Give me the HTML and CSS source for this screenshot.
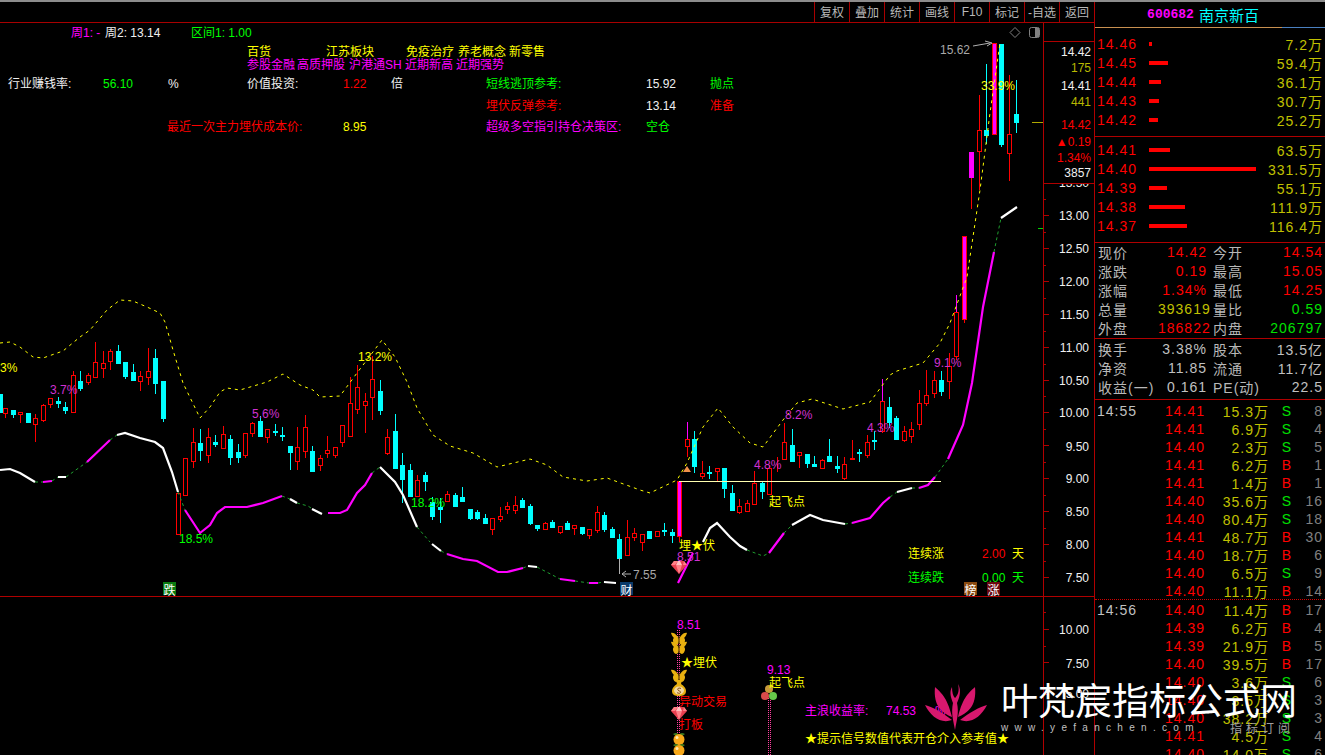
FILE: index.html
```html
<!DOCTYPE html>
<html lang="zh-CN">
<head>
<meta charset="utf-8">
<title>600682 南京新百</title>
<link rel="stylesheet" href="styles.css">
</head>
<body>
<div class="app">
  <div class="topstrip"></div>
  <div class="workspace">
    <main class="left">
      <nav class="toolbar">
        <span class="tb">复权</span><span class="tb">叠加</span><span class="tb">统计</span><span class="tb">画线</span><span class="tb">F10</span><span class="tb">标记</span><span class="tb">-自选</span><span class="tb">返回</span>
      </nav>
      <svg class="chart" viewBox="0 23 1094 732" width="1094" height="732" xmlns="http://www.w3.org/2000/svg">
        <defs>
          <symbol id="fly" viewBox="0 0 16 14">
            <path class="gold" d="M8 8C7 4 3 0 0 1c1 3 2 4 3 5-2 1-1 6 2 7 2 0 3-3 3-5zM8 8c1-4 5-8 8-7-1 3-2 4-3 5 2 1 1 6-2 7-2 0-3-3-3-5z"/>
            <path class="brown" d="M7.4 4h1.2v8H7.4z"/>
          </symbol>
          <symbol id="bag" viewBox="0 0 14 16">
            <path class="gold" d="M4 0h6L9 4c3 2 5 4 5 7 0 4-3 5-7 5s-7-1-7-5c0-3 2-5 5-7z"/>
            <ellipse class="cream" cx="7" cy="10.5" rx="5" ry="4"/>
            <path class="bagline" d="M9 8.5C7 7.500 5 8.500 6 10s3 1 2.500 2.500S5.500 13 5 12.500"/>
          </symbol>
          <symbol id="gem" viewBox="0 0 16 13">
            <path class="gem1" d="M3 0h10l3 4-8 9-8-9z"/>
            <path class="gem2" d="M3 0h4L4 4H0zM5 4h6l-3 9zM13 0l3 4h-4z"/>
            <path class="gem3" d="M7 0h2l2 4H5z"/>
          </symbol>
          <symbol id="orange" viewBox="0 0 14 14">
            <path class="leaf" d="M1 3c3-2 5-1 6 1 1-2 3-3 6-1-2 2-4 2-6 1-2 1-4 1-6-1z"/>
            <circle class="orangeb" cx="7" cy="8.500" r="5.500"/>
            <circle class="cream2" cx="5" cy="6.500" r="1.500"/>
          </symbol>
        </defs>

        <!-- frame -->
        <path class="frame" d="M0 596.500H1094M1043.500 23V755"/>
        <path class="frame" d="M1043 215.500h6M1043 248.500h6M1043 281.500h6M1043 314.500h6M1043 347.500h6M1043 380.500h6M1043 412.500h6M1043 445.500h6M1043 478.500h6M1043 511.500h6M1043 544.500h6M1043 577.500h6M1043 199.500h3M1043 232.500h3M1043 265.500h3M1043 298.500h3M1043 331.500h3M1043 364.500h3M1043 396.500h3M1043 429.500h3M1043 462.500h3M1043 495.500h3M1043 528.500h3M1043 561.500h3M1043 629.500h6M1043 662.500h6M1043 694.500h6M1043 612.500h3M1043 646.500h3"/>
        <path class="goldline" d="M1032 122.500h11"/>
        <path class="greenmark" d="M1038 228.500h5"/>

        <!-- candles -->
        <path class="wick-r" d="M5.500 408V418M20.500 412V423M35.500 414V442M43.500 404V422M50.500 398V408M73.500 371V412M88.500 373V385M95.500 342V377M103.500 351V378M110.500 349V370M140.500 371V391M148.500 348V385M193.500 428V468M208.500 428V463M223.500 426V448M245.500 433V458M252.500 422V437M267.500 429V443M297.500 427V470M305.500 415V458M320.500 455V471M327.500 436V458M335.500 447V458M342.500 425V447M350.500 377V437M357.500 365V414M365.500 393V433M372.500 356V420M387.500 429V455M417.500 475V496M447.500 491V501M492.500 518V535M500.500 507V522M507.500 502V514M515.500 496V514M545.500 522V529M560.500 526V534M574.500 525V535M589.500 529V539M597.500 506V533M627.500 520V555M634.500 528V541M642.500 534V551M657.500 531V537M687.500 439V457M702.500 461V479M717.500 468V481M739.500 499V514M747.500 500V511M754.500 471V504M769.500 465V494M777.500 457V472M784.500 423V459M799.500 452V468M822.500 459V468M844.500 457V480M852.500 440V459M867.500 435V458M882.500 401V433M904.500 426V442M911.500 422V443M919.500 390V430M926.500 370V406M934.500 371V398M949.500 353V399M956.500 312V360M971.500 177V209M979.500 95V190M1009.500 75V181M964.500 319V323M679.500 536V542"/>
        <path class="wick-m" d="M687.500 422V439M882.500 379V401M956.500 295V312"/>
        <path class="body-r" d="M3.500 408.500h4v5h-4zM18.500 412.500h4v2h-4zM33.500 418.500h4v6h-4zM41.500 405.500h4v15h-4zM48.500 398.500h4v6h-4zM71.500 375.500h4v37h-4zM86.500 375.500h4v7h-4zM93.500 362.500h4v15h-4zM101.500 363.500h4v5h-4zM108.500 351.500h4v10h-4zM138.500 376.500h4v5h-4zM146.500 371.500h4v6h-4zM176.500 493.500h4v41h-4zM183.500 458.500h4v37h-4zM191.500 442.500h4v19h-4zM206.500 437.500h4v18h-4zM221.500 434.500h4v14h-4zM243.500 433.500h4v22h-4zM250.500 423.500h4v10h-4zM265.500 429.500h4v8h-4zM295.500 447.500h4v14h-4zM303.500 427.500h4v24h-4zM318.500 458.500h4v7h-4zM325.500 450.500h4v3h-4zM333.500 447.500h4v8h-4zM340.500 425.500h4v17h-4zM348.500 403.500h4v33h-4zM355.500 387.500h4v22h-4zM363.500 401.500h4v4h-4zM370.500 379.500h4v18h-4zM385.500 437.500h4v16h-4zM415.500 480.500h4v16h-4zM445.500 494.500h4v7h-4zM490.500 518.500h4v11h-4zM498.500 516.500h4v3h-4zM505.500 506.500h4v3h-4zM513.500 505.500h4v5h-4zM543.500 523.500h4v6h-4zM558.500 526.500h4v6h-4zM572.500 525.500h4v3h-4zM587.500 529.500h4v6h-4zM595.500 512.500h4v18h-4zM625.500 537.500h4v18h-4zM632.500 533.500h4v4h-4zM640.500 534.500h4v8h-4zM655.500 531.500h4v5h-4zM685.500 439.500h4v7h-4zM700.500 473.500h4v3h-4zM715.500 468.500h4v3h-4zM737.500 506.500h4v6h-4zM745.500 503.500h4v8h-4zM752.500 483.500h4v21h-4zM767.500 468.500h4v26h-4zM782.500 442.500h4v17h-4zM797.500 452.500h4v3h-4zM820.500 460.500h4v8h-4zM842.500 464.500h4v14h-4zM850.500 458.500h4v1h-4zM865.500 442.500h4v13h-4zM880.500 401.500h4v30h-4zM902.500 431.500h4v9h-4zM909.500 429.500h4v7h-4zM917.500 403.500h4v21h-4zM924.500 395.500h4v8h-4zM932.500 380.500h4v13h-4zM947.500 366.500h4v15h-4zM954.500 312.500h4v44h-4zM977.500 130.500h4v21h-4zM1007.500 134.500h4v19h-4z"/>
        <path class="wick-c" d="M0.500 394V412M13.500 410V418M28.500 413V422M58.500 397V408M65.500 402V414M80.500 371V391M118.500 345V364M125.500 362V379M133.500 364V381M155.500 349V394M163.500 381V422M200.500 429V461M215.500 435V447M230.500 435V465M238.500 444V463M260.500 416V437M275.500 424V436M282.500 427V441M290.500 446V470M312.500 446V472M380.500 380V415M395.500 414V468M402.500 453V503M410.500 464V496M425.500 472V491M432.500 497V520M440.500 498V523M455.500 493V506M462.500 487V502M470.500 509V520M477.500 510V520M485.500 514V523M522.500 498V507M530.500 504V525M537.500 525V531M552.500 520V528M567.500 521V530M582.500 527V535M604.500 512V532M612.500 527V537M619.500 534V570M649.500 531V539M664.500 523V536M672.500 529V543M694.500 431V473M709.500 466V479M724.500 468V498M732.500 485V511M762.500 481V499M792.500 429V462M807.500 454V468M814.500 456V467M829.500 439V462M837.500 456V473M859.500 449V462M874.500 431V450M889.500 397V428M896.500 416V439M941.500 371V396M986.500 64V144M1001.500 44V147M1016.500 80V133"/>
        <path class="body-c" d="M-2 394h4v18h-4zM11.500 410.500h4v4h-4zM26.500 413.500h4v9h-4zM56.500 401.500h4v2h-4zM63.500 407.500h4v3h-4zM78.500 381.500h4v7h-4zM116.500 351.500h4v12h-4zM123.500 362.500h4v14h-4zM131.500 372.500h4v8h-4zM153.500 358.500h4v25h-4zM161.500 381.500h4v37h-4zM198.500 443.500h4v7h-4zM213.500 442.500h4v2h-4zM228.500 439.500h4v18h-4zM236.500 452.500h4v5h-4zM258.500 421.500h4v15h-4zM273.500 431.500h4v1h-4zM280.500 435.500h4v1h-4zM288.500 446.500h4v6h-4zM310.500 451.500h4v20h-4zM378.500 391.500h4v19h-4zM393.500 431.500h4v37h-4zM400.500 465.500h4v14h-4zM408.500 470.500h4v26h-4zM423.500 475.500h4v6h-4zM430.500 502.500h4v14h-4zM438.500 507.500h4v2h-4zM453.500 495.500h4v11h-4zM460.500 497.500h4v4h-4zM468.500 509.500h4v9h-4zM475.500 512.500h4v6h-4zM483.500 518.500h4v5h-4zM520.500 500.500h4v7h-4zM528.500 506.500h4v17h-4zM535.500 525.500h4v3h-4zM550.500 522.500h4v5h-4zM565.500 523.500h4v6h-4zM580.500 527.500h4v6h-4zM602.500 515.500h4v14h-4zM610.500 529.500h4v8h-4zM617.500 539.500h4v19h-4zM647.500 531.500h4v7h-4zM662.500 530.500h4v1h-4zM670.500 532.500h4v3h-4zM692.500 439.500h4v27h-4zM707.500 472.500h4v1h-4zM722.500 468.500h4v20h-4zM730.500 493.500h4v17h-4zM760.500 483.500h4v8h-4zM790.500 445.500h4v16h-4zM805.500 454.500h4v9h-4zM812.500 464.500h4v2h-4zM827.500 456.500h4v5h-4zM835.500 466.500h4v2h-4zM857.500 452.500h4v1h-4zM872.500 440.500h4v1h-4zM887.500 407.500h4v15h-4zM894.500 418.500h4v21h-4zM939.500 380.500h4v11h-4zM984.500 130.500h4v5h-4zM999.500 44.500h4v100h-4zM1014.500 114.500h4v8h-4z"/>
        <path class="body-m" d="M969.500 152.500h4v25h-4z"/>
        <path class="body-mr" d="M677.500 481.500h4v55h-4zM962.500 236.500h4v83h-4zM992.500 43.500h4v91h-4z"/>

        <!-- bands -->
        <polyline class="band" points="0,343 10,342 20,347 33,357 43,358 63,351 80,337 90,330 107,310 120,300 133,301 147,307 160,313 165,322 173,350 183,383 200,418 210,407 220,392 227,388 240,390 267,382 283,374 300,385 313,390 320,397 340,396 357,373 382,340 395,357 407,382 417,408 433,435 450,446 473,453 497,467 530,459 547,465 563,477 587,481 607,478 640,490 650,493 677,480 687,463 703,427 718,408 733,427 750,443 763,447 783,420 797,403 812,399 843,409 870,402 890,375 897,371 923,363 940,343 950,323 967,277 980,190 990,113 1000,43"/>

        <!-- main line -->
        <path class="ml-g" d="M35 482L43 482M52 481L58 477M66 477L87 462M110 440L117 435M178 492L185 510M282 496L290 499M297 503L308 506L320 514M372 473L380 467M417 527L430 542M441 551L447 554M523 568L528 566M537 567L560 579M575 581L589 583M598 583L604 582M747 550L763 556L769 553M784 533L792 525M845 524L852 523M890 497L897 492M912 488L919 488M935 477L948 459M994 252L1001 218"/>
        <path class="ml-w" d="M0 470L10 469L20 473L35 482M58 477L66 477M117 435L125 433L140 438L155 442L163 448L172 472L178 492M290 499L297 503M312 509L322 514M380 467L395 482L403 495L417 527M432 544L441 551M528 566L537 567M604 582L616 583M703 542L710 528L717 523L730 537L740 546L747 550M792 525L810 515L823 520L845 524M897 492L912 488M1001 218L1017 207"/>
        <path class="ml-m" d="M43 482L52 481M87 462L110 440M185 510L200 533L210 525L217 513L225 507L247 507L263 503L282 496M328 513L340 513L347 510L357 493L365 485L372 473M447 554L463 559L477 561L498 572L507 572L523 568M560 579L575 581M589 583L598 583M678 583L693 553M769 553L784 533M852 523L870 518L883 503L890 497M919 488L928 485L935 477M948 459L963 425L972 383L983 307L994 252"/>
        <path class="level" d="M679 481.500H941"/>

        <!-- chart labels -->
        <g class="lbl">
          <text class="mag" x="71" y="32">周1: -</text><text class="wht" x="105" y="32">周2: 13.14</text><text class="grn" x="191" y="32">区间1: 1.00</text>
          <text class="yel" x="247" y="51">百货</text><text class="yel" x="326" y="51">江苏板块</text><text class="yel" x="406" y="51">免疫治疗</text><text class="yel" x="458" y="51">养老概念</text><text class="yel" x="509" y="51">新零售</text>
          <text class="mag" x="247" y="64">参股金融</text><text class="mag" x="297" y="64">高质押股</text><text class="mag" x="349" y="64">沪港通SH</text><text class="mag" x="405" y="64">近期新高</text><text class="mag" x="456" y="64">近期强势</text>
          <text class="wht" x="8" y="83">行业赚钱率:</text><text class="grn" x="103" y="83">56.10</text><text class="wht" x="168" y="83">%</text>
          <text class="wht" x="247" y="83">价值投资:</text><text class="red" x="343" y="83">1.22</text><text class="wht" x="391" y="83">倍</text>
          <text class="grn" x="486" y="83">短线逃顶参考:</text><text class="wht" x="646" y="83">15.92</text><text class="grn" x="710" y="83">抛点</text>
          <text class="red" x="486" y="105">埋伏反弹参考:</text><text class="wht" x="646" y="105">13.14</text><text class="red" x="710" y="105">准备</text>
          <text class="red" x="167" y="126">最近一次主力埋伏成本价:</text><text class="yel" x="343" y="126">8.95</text>
          <text class="mag" x="486" y="126">超级多空指引持仓决策区:</text><text class="grn" x="646" y="126">空仓</text>

          <text class="yel" x="0" y="367">3%</text><text class="mdim" x="50" y="389">3.7%</text><text class="mdim" x="252" y="413">5.6%</text>
          <text class="yel" x="358" y="356">13.2%</text><text class="grn" x="179" y="538">18.5%</text><text class="grn" x="411" y="502">18.2%</text>
          <text class="mdim" x="754" y="464">4.8%</text><text class="mdim" x="785" y="414">8.2%</text><text class="mdim" x="867" y="427">4.3%</text><text class="mdim" x="934" y="362">9.1%</text>
          <text class="yel" x="981" y="85">33.9%</text>
          <text class="gry" x="940" y="49">15.62</text><text class="gry" x="633" y="574">7.55</text>
          <text class="yel" x="769" y="501">起飞点</text>
          <text class="yel" x="679" y="545">埋★伏</text><text class="mdim" x="677" y="556">8.51</text>
          <text class="yel" x="908" y="553">连续涨</text><text class="red" x="982" y="553">2.00</text><text class="yel" x="1012" y="553">天</text>
          <text class="grn" x="908" y="577">连续跌</text><text class="grn" x="982" y="577">0.00</text><text class="grn" x="1012" y="577">天</text>
        </g>
        <g class="lbl end">
          <text class="wht" x="1089" y="215">13.00</text><text class="wht" x="1089" y="248">12.50</text><text class="wht" x="1089" y="281">12.00</text><text class="wht" x="1089" y="314">11.50</text><text class="wht" x="1089" y="347">11.00</text><text class="wht" x="1089" y="380">10.50</text><text class="wht" x="1089" y="412">10.00</text><text class="wht" x="1089" y="446">9.50</text><text class="wht" x="1089" y="478">9.00</text><text class="wht" x="1089" y="511">8.50</text><text class="wht" x="1089" y="544">8.00</text><text class="wht" x="1089" y="577">7.50</text>
          <text class="wht" x="1089" y="182">13.50</text>
          <text class="wht" x="1089" y="629">10.00</text><text class="wht" x="1089" y="663">7.50</text><text class="wht" x="1089" y="693">5.00</text>
        </g>

        <path class="arrow" d="M973 46L990 43M985 41L992 43L987 46M622 574H631M622 574L626 571M622 574L626 577M619.500 558V574"/>
        <path class="tri" d="M683 472L687 466L691 472z"/>
        <use href="#gem" x="671" y="561" width="16" height="13"/>

        <g class="tag-set">
          <rect class="tag-g" x="163" y="582" width="13" height="13"/><text class="tagt" x="169.500" y="589">跌</text>
          <rect class="tag-b" x="620" y="582" width="13" height="13"/><text class="tagt" x="626.500" y="589">财</text>
          <rect class="tag-o" x="964" y="582" width="13" height="13"/><text class="tagt" x="970.500" y="589">榜</text>
          <rect class="tag-r" x="987" y="582" width="13" height="13"/><text class="tagt" x="993.500" y="589">涨</text>
        </g>

        <!-- floating readout -->
        <path class="box" d="M1044 41.500H1094V183.500H1044z"/>
        <path class="boxline" d="M1044 41.500H1094M1044 183.500H1094"/>
        <g class="lbl end">
          <text class="wht" x="1091" y="51">14.42</text><text class="oli" x="1091" y="67">175</text><text class="wht" x="1091" y="85">14.41</text><text class="oli" x="1091" y="101">441</text>
          <text class="red" x="1091" y="124">14.42</text><text class="red" x="1091" y="141">▲0.19</text><text class="red" x="1091" y="157">1.34%</text><text class="wht" x="1091" y="172">3857</text>
        </g>

        <!-- view icons -->
        <path class="vicon" d="M1015 27.500L1020 32.500L1015 37.500L1010 32.500z"/>
        <rect class="vicon2" x="1029.500" y="27.500" width="10" height="10" rx="2"/>
        <rect class="vicon3" x="1035" y="28" width="4" height="9"/>

        <!-- indicator panel -->
        <path class="dots" d="M677.500 630V735M679.500 630V735M768.500 698V755M770.500 698V755"/>
        <use href="#fly" x="671" y="632" width="16" height="14"/>
        <use href="#fly" x="671" y="641" width="16" height="14"/>
        <use href="#fly" x="671" y="669" width="16" height="14"/>
        <use href="#bag" x="672" y="680" width="14" height="16"/>
        <use href="#gem" x="671" y="707" width="16" height="13"/>
        <use href="#orange" x="672" y="731" width="14" height="14"/>
        <use href="#orange" x="672" y="742" width="14" height="14"/>
        <circle class="ball-y" cx="769" cy="689" r="4"/><circle class="ball-r" cx="765" cy="696" r="4"/><circle class="ball-g" cx="773" cy="696" r="4"/>
        <g class="lbl">
          <text class="mag" x="677" y="624">8.51</text><text class="yel" x="681" y="662">★埋伏</text>
          <text class="red" x="679" y="701">异动交易</text><text class="red" x="679" y="724">打板</text>
          <text class="mag" x="767" y="669">9.13</text><text class="yel" x="769" y="682">起飞点</text>
          <text class="mag" x="805" y="710">主浪收益率:</text><text class="mag" x="886" y="710">74.53</text><text class="mag" x="935" y="710">%</text>
          <text class="yel" x="805" y="738">★提示信号数值代表开仓介入参考值★</text>
        </g>
      </svg>
    </main>

    <aside class="panel">
      <header class="ph"><b class="code">600682</b><span class="name">南京新百</span></header>
      <div class="phline"><span class="phline-a"></span><span class="phline-b"></span></div>

      <section class="book sells">
        <div class="bk"><span class="bp">14.46</span><i class="bar" style="width:3px"></i><span class="bv">7.2万</span></div>
        <div class="bk"><span class="bp">14.45</span><i class="bar" style="width:19px"></i><span class="bv">59.4万</span></div>
        <div class="bk"><span class="bp">14.44</span><i class="bar" style="width:12px"></i><span class="bv">36.1万</span></div>
        <div class="bk"><span class="bp">14.43</span><i class="bar" style="width:10px"></i><span class="bv">30.7万</span></div>
        <div class="bk"><span class="bp">14.42</span><i class="bar" style="width:9px"></i><span class="bv">25.2万</span></div>
      </section>
      <section class="book buys">
        <div class="bk"><span class="bp">14.41</span><i class="bar" style="width:21px"></i><span class="bv">63.5万</span></div>
        <div class="bk"><span class="bp">14.40</span><i class="bar" style="width:107px"></i><span class="bv">331.5万</span></div>
        <div class="bk"><span class="bp">14.39</span><i class="bar" style="width:18px"></i><span class="bv">55.1万</span></div>
        <div class="bk"><span class="bp">14.38</span><i class="bar" style="width:36px"></i><span class="bv">111.9万</span></div>
        <div class="bk"><span class="bp">14.37</span><i class="bar" style="width:38px"></i><span class="bv">116.4万</span></div>
      </section>

      <section class="info first">
        <span class="k">现价</span><span class="v r">14.42</span><span class="k">今开</span><span class="v r">14.54</span>
        <span class="k">涨跌</span><span class="v r">0.19</span><span class="k">最高</span><span class="v r">15.05</span>
        <span class="k">涨幅</span><span class="v r">1.34%</span><span class="k">最低</span><span class="v r">14.25</span>
        <span class="k">总量</span><span class="v y">393619</span><span class="k">量比</span><span class="v g">0.59</span>
        <span class="k">外盘</span><span class="v r">186822</span><span class="k">内盘</span><span class="v g">206797</span>
      </section>
      <section class="info second">
        <span class="k">换手</span><span class="v n">3.38%</span><span class="k">股本</span><span class="v n">13.5亿</span>
        <span class="k">净资</span><span class="v n">11.85</span><span class="k">流通</span><span class="v n">11.7亿</span>
        <span class="k">收益(一)</span><span class="v n">0.161</span><span class="k">PE(动)</span><span class="v n">22.5</span>
      </section>

      <section class="trades">
        <div class="tblock">
          <div class="t"><span class="tm">14:55</span><span class="tp">14.41</span><span class="tv">15.3万</span><span class="ts s">S</span><span class="tc">8</span></div>
          <div class="t"><span class="tm"></span><span class="tp">14.41</span><span class="tv">6.9万</span><span class="ts s">S</span><span class="tc">4</span></div>
          <div class="t"><span class="tm"></span><span class="tp">14.40</span><span class="tv">2.3万</span><span class="ts s">S</span><span class="tc">5</span></div>
          <div class="t"><span class="tm"></span><span class="tp">14.41</span><span class="tv">6.2万</span><span class="ts b">B</span><span class="tc">1</span></div>
          <div class="t"><span class="tm"></span><span class="tp">14.41</span><span class="tv">1.4万</span><span class="ts b">B</span><span class="tc">1</span></div>
          <div class="t"><span class="tm"></span><span class="tp">14.40</span><span class="tv">35.6万</span><span class="ts s">S</span><span class="tc">16</span></div>
          <div class="t"><span class="tm"></span><span class="tp">14.40</span><span class="tv">80.4万</span><span class="ts s">S</span><span class="tc">18</span></div>
          <div class="t"><span class="tm"></span><span class="tp">14.41</span><span class="tv">48.7万</span><span class="ts b">B</span><span class="tc">30</span></div>
          <div class="t"><span class="tm"></span><span class="tp">14.40</span><span class="tv">18.7万</span><span class="ts b">B</span><span class="tc">6</span></div>
          <div class="t"><span class="tm"></span><span class="tp">14.40</span><span class="tv">6.5万</span><span class="ts s">S</span><span class="tc">9</span></div>
          <div class="t"><span class="tm"></span><span class="tp">14.40</span><span class="tv">11.1万</span><span class="ts b">B</span><span class="tc">14</span></div>
        </div>
        <div class="tblock">
          <div class="t"><span class="tm">14:56</span><span class="tp">14.40</span><span class="tv">11.4万</span><span class="ts b">B</span><span class="tc">17</span></div>
          <div class="t"><span class="tm"></span><span class="tp">14.39</span><span class="tv">6.2万</span><span class="ts b">B</span><span class="tc">4</span></div>
          <div class="t"><span class="tm"></span><span class="tp">14.39</span><span class="tv">21.9万</span><span class="ts b">B</span><span class="tc">5</span></div>
          <div class="t"><span class="tm"></span><span class="tp">14.40</span><span class="tv">39.5万</span><span class="ts b">B</span><span class="tc">17</span></div>
          <div class="t"><span class="tm"></span><span class="tp">14.40</span><span class="tv">3.6万</span><span class="ts s">S</span><span class="tc">6</span></div>
          <div class="t"><span class="tm"></span><span class="tp">14.40</span><span class="tv">3.5万</span><span class="ts s">S</span><span class="tc">3</span></div>
          <div class="t"><span class="tm"></span><span class="tp">14.40</span><span class="tv">38.2万</span><span class="ts s">S</span><span class="tc">3</span></div>
          <div class="t"><span class="tm"></span><span class="tp">14.41</span><span class="tv">4.5万</span><span class="ts s">S</span><span class="tc">4</span></div>
          <div class="t"><span class="tm"></span><span class="tp">14.40</span><span class="tv">14.0万</span><span class="ts s">S</span><span class="tc">6</span></div>
        </div>
      </section>
    </aside>
  </div>

  <div class="watermark">
    <svg class="lotus" viewBox="0 0 62 47" width="62" height="47" xmlns="http://www.w3.org/2000/svg">
      <path class="pink" d="M10 4C15 9 22 13 27 34C18 30 8 24 10 4zM50 4C45 9 38 13 33 34C42 30 52 24 50 4zM0 22C8 24 18 30 27 37C16 41 6 34 0 22zM62 22C54 24 44 30 35 37C46 41 56 34 62 22z"/>
      <path class="pink" d="M30 47C28 36 26 30 28 20C26 15 24 9 27 4C27 9 28 13 30 15C32 13 35 9 33 1C37 8 34 15 32 20C34 30 32 36 30 47z"/>
    </svg>
    <div class="wm-text">
      <div class="wm-title">叶梵宸指标公式网</div>
      <div class="wm-sub"><span class="wm-url">www.yefanchen.com</span><span class="wm-tag">指标订阅</span></div>
    </div>
  </div>
</div>
</body>
</html>
```

FILE: styles.css
```css
* { box-sizing: border-box; margin: 0; padding: 0; }
html, body { width: 100%; height: 100%; background: #000; overflow: hidden; }
body { font-family: "Liberation Sans", "Noto Sans CJK SC", sans-serif; color: #c0c0c0; }

.app { position: relative; width: 1325px; height: 755px; overflow: hidden; background: #000; display: flex; flex-direction: column; }
.topstrip { height: 2px; flex: none; background: #8c8c8c; }
.workspace { flex: 1; display: flex; min-height: 0; }
.left { width: 1094px; flex: none; display: flex; flex-direction: column; }

.toolbar { height: 21px; flex: none; display: flex; justify-content: flex-end; border-bottom: 1px solid #a80000; }
.tb { width: 35px; padding-bottom: 1px; display: flex; align-items: center; justify-content: center; border-left: 1px solid #a80000; font-size: 12px; color: #b8b8b8; }

.chart { display: block; flex: none; }
.frame { stroke: #b00000; stroke-width: 1; fill: none; shape-rendering: crispEdges; }
.goldline { stroke: #b0a800; stroke-width: 1; shape-rendering: crispEdges; }
.greenmark { stroke: #00d000; stroke-width: 1; shape-rendering: crispEdges; }

.wick-r { stroke: #ff0000; stroke-width: 1; fill: none; shape-rendering: crispEdges; }
.wick-m { stroke: #ff00ff; stroke-width: 1; fill: none; shape-rendering: crispEdges; }
.wick-c { stroke: #00ffff; stroke-width: 1; fill: none; shape-rendering: crispEdges; }
.body-r { stroke: #ff0000; stroke-width: 1; fill: #000; shape-rendering: crispEdges; }
.body-c { stroke: #00ffff; stroke-width: 1; fill: #00ffff; shape-rendering: crispEdges; }
.body-m { stroke: #ff00ff; stroke-width: 1; fill: #ff00ff; shape-rendering: crispEdges; }
.body-mr { stroke: #ff0000; stroke-width: 1; fill: #ff00ff; shape-rendering: crispEdges; }

.band { fill: none; stroke: #ffff00; stroke-width: 1; stroke-dasharray: 3 4; }
.ml-g { fill: none; stroke: #1f9f2f; stroke-width: 1; stroke-dasharray: 3 3; }
.ml-w { fill: none; stroke: #ffffff; stroke-width: 2.200; }
.ml-m { fill: none; stroke: #ff00ff; stroke-width: 2.200; }
.level { stroke: #ffffb0; stroke-width: 1; shape-rendering: crispEdges; }

.lbl { transform: translateY(1px); }
.lbl text { font-family: "Liberation Sans", "Noto Sans CJK SC", sans-serif; font-size: 12px; dominant-baseline: central; }
.end text { text-anchor: end; }
.wht { fill: #f0f0f0; }
.gry { fill: #a8a8a8; }
.yel { fill: #ffff00; }
.mag { fill: #ff00ff; }
.mdim { fill: #d030d0; }
.grn { fill: #00ff00; }
.red { fill: #ff0000; }
.oli { fill: #b8b800; }

.arrow { fill: none; stroke: #b0b0b0; stroke-width: 1; }
.tri { fill: #f0904a; }
.tag-g { fill: #0a7a10; }
.tag-b { fill: #0a3a6a; }
.tag-o { fill: #8a4a10; }
.tag-r { fill: #6a0a10; }
.tagt { font-family: "Noto Sans CJK SC", sans-serif; font-size: 12px; fill: #fff; text-anchor: middle; dominant-baseline: central; }

.box { fill: #000; }
.boxline { stroke: #b00000; stroke-width: 1; fill: none; shape-rendering: crispEdges; }
.vicon { fill: none; stroke: #808080; stroke-width: 1; }
.vicon2 { fill: none; stroke: #808080; stroke-width: 1; }
.vicon3 { fill: #808080; }

.dots { stroke: #ff3fa0; stroke-width: 1; stroke-dasharray: 1 1; fill: none; shape-rendering: crispEdges; }
.gold { fill: #e8b010; }
.brown { fill: #6a4208; }
.cream { fill: #f0d8a0; }
.cream2 { fill: #ffe9b0; }
.bagline { fill: none; stroke: #8a4a10; stroke-width: 1; }
.gem1 { fill: #e84050; }
.gem2 { fill: #ff8088; }
.gem3 { fill: #ffc0c0; }
.leaf { fill: #3a7a20; }
.orangeb { fill: #f8a818; }
.ball-y { fill: #c89a3a; }
.ball-r { fill: #d84a4a; }
.ball-g { fill: #66c84a; }

.panel { flex: 1; display: flex; flex-direction: column; border-left: 1px solid #b00000; min-width: 0; }
.ph { height: 25px; flex: none; display: flex; align-items: center; justify-content: center; gap: 5px; padding: 0 14px 0 0; }
.code { font-family: "Liberation Mono", monospace; font-size: 13px; font-weight: 700; color: #ff00ff; }
.name { font-family: "Noto Sans CJK SC", sans-serif; font-size: 15px; color: #00ffff; }
.phline { height: 1px; flex: none; display: flex; }
.phline-a { width: 187px; background: #c89050; }
.phline-b { flex: 1; background: #4a80c0; }

.book { flex: none; }
.sells { padding-top: 6px; height: 109px; border-bottom: 1px solid #b00000; }
.buys { padding-top: 3px; height: 106px; border-bottom: 1px solid #b00000; }
.bk { height: 19px; display: flex; align-items: center; padding-right: 2px; }
.bp { width: 54px; flex: none; padding-left: 2px; font-size: 14px; letter-spacing: 1px; color: #ff0000; }
.bar { display: block; height: 4px; margin-top: 1px; background: #ff0000; }
.bv { margin-left: auto; font-size: 14px; letter-spacing: 1px; color: #c0c000; }

.info { flex: none; display: grid; grid-template-columns: 60px 49px 56px 1fr; grid-auto-rows: 19px; align-items: center; padding: 0 2px 0 3px; font-size: 14px; letter-spacing: 1px; border-bottom: 1px solid #b00000; }
.first { height: 97px; margin-top: -1px; }
.second { height: 61px; }
.info .k { padding-left: 0; color: #b8b8b8; white-space: nowrap; }
.info .k:nth-child(4n+3) { padding-left: 6px; }
.info .v { text-align: right; white-space: nowrap; }
.r { color: #ff0000; }
.y { color: #c0c000; }
.g { color: #00e000; }
.n { color: #c0c0c0; }

.trades { flex: 1; min-height: 0; overflow: hidden; padding-top: 1px; }
.tblock { border-bottom: 1px dotted #d00000; margin-bottom: -1px; padding-bottom: 0; }
.tblock + .tblock { border-bottom: 0; padding-top: 1px; }
.t { height: 18px; display: grid; grid-template-columns: 50px 60px 64px 36px 1fr; align-items: center; padding-right: 2px; font-size: 14px; letter-spacing: 1px; white-space: nowrap; }
.tm { padding-left: 2px; color: #c0c0c0; }
.tp { text-align: right; color: #ff0000; }
.tv { text-align: right; color: #c0c000; }
.ts { text-align: center; }
.ts.s { color: #00e000; }
.ts.b { color: #ff0000; }
.tc { text-align: right; color: #808080; }

.watermark { position: absolute; left: 925px; top: 679px; display: flex; gap: 14px; pointer-events: none; }
.lotus { display: block; flex: none; margin-top: 4px; }
.pink { fill: #d8186e; }
.wm-text { width: 300px; }
.wm-title { font-family: "Noto Sans CJK SC", sans-serif; font-size: 37px; line-height: 40px; color: #fff; white-space: nowrap; }
.wm-sub { display: flex; justify-content: space-between; align-items: center; padding-right: 7px; margin-top: 0; color: #b0b0b0; }
.wm-url { font-size: 10px; letter-spacing: 6.300px; color: #c0c0c0; }
.wm-tag { font-family: "Noto Sans CJK SC", sans-serif; font-size: 12px; letter-spacing: 4px; color: #a0a0a0; }
```
